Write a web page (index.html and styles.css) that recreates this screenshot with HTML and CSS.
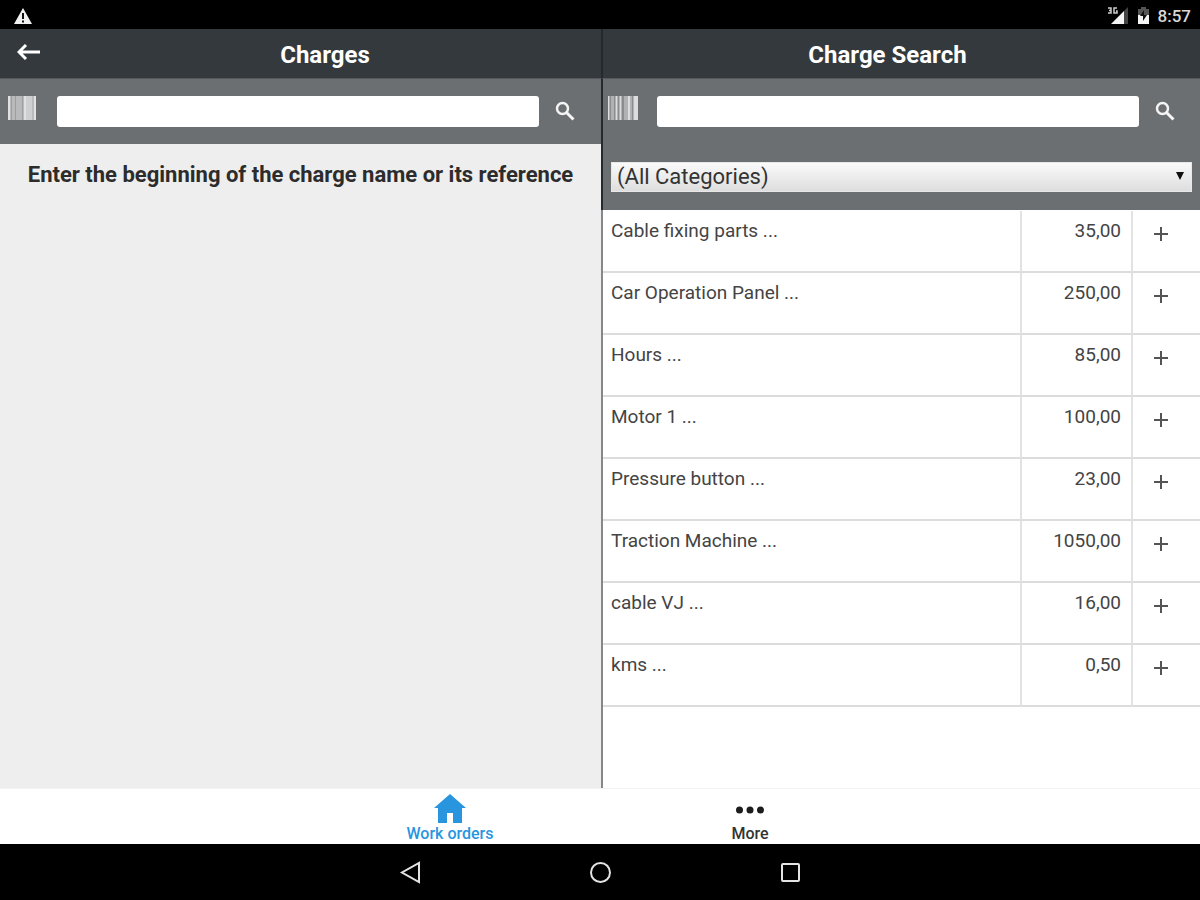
FILE: index.html
```html
<!DOCTYPE html>
<html lang="en">
<head>
<meta charset="utf-8">
<title>Charges</title>
<link rel="stylesheet" href="styles.css">
</head>
<body>
<div class="status">
  <svg width="20" height="18" viewBox="0 0 20 18"><path d="M10 1 19 17H1Z" fill="#f2f2f2"/><path d="M10 6v6M10 13.500v2" stroke="#111" stroke-width="2"/></svg>
  <div class="status-right">
    <svg width="22" height="20" viewBox="0 0 22 20"><path d="M21 1v17h-4V5Z" fill="#444"/><path d="M17 5v13H4Z" fill="#f5f5f5"/><path d="M1 2h3v5H1M2 4.500h2M10 2H7v5h3V5H9" fill="none" stroke="#ccc" stroke-width="1.500"/></svg>
    <svg width="13" height="18" viewBox="0 0 13 18"><path d="M1 2h3V0h5v2h3v7H1Z" fill="#555"/><path d="M1 8h11v9H1Z" fill="#f5f5f5"/><path d="M7 3v5h3l-4 6V9H3Z" fill="#111"/></svg>
    <span class="clock">8:57</span>
  </div>
</div>
<main class="panels">
  <section class="panel panel-left">
    <header class="bar">
      <button class="back" aria-label="Back"><svg width="24" height="16" viewBox="0 0 24 16"><path d="M9 1 2 8l7 7M2 8h21" fill="none" stroke="#fff" stroke-width="3"/></svg></button>
      <h1 class="title">Charges</h1>
    </header>
    <form class="search">
      <button type="button" class="icon-btn" aria-label="Scan barcode"><svg width="30" height="24" viewBox="0 0 30 24"><path fill="#b8babb" d="M1 0h28v24H1Z"/><path fill="#e0e1e2" d="M1 0h2v24H1zM17 0h2v24h-2zM27 0h2v24h-2z"/><path fill="#9c9ea0" d="M4 0h1v24H4zM8 0h1v24H8zM15 0h1v24h-1z"/><path fill="#cdcfd0" d="M19 0h6v24h-6z"/></svg></button>
      <input class="field" type="text" aria-label="Charge name or reference">
      <button type="button" class="icon-btn find" aria-label="Search"><svg width="20" height="20" viewBox="0 0 20 20"><circle cx="7.500" cy="7.500" r="5.500" fill="none" stroke="#f4f4f4" stroke-width="2.500"/><path d="m11.500 11.500 7 7" stroke="#f4f4f4" stroke-width="3"/></svg></button>
    </form>
    <p class="hint">Enter the beginning of the charge name or its reference</p>
  </section>
  <section class="panel panel-right">
    <header class="bar"><h2 class="title">Charge Search</h2></header>
    <form class="search">
      <button type="button" class="icon-btn" aria-label="Scan barcode"><svg width="30" height="24" viewBox="0 0 30 24"><path fill="#b0b2b3" d="M0 0h30v24H0Z"/><path fill="#8a8c8e" d="M2 0h1v24H2zM6 0h1v24H6zM10 0h1v24h-1zM14 0h2v24h-2zM24 0h1v24h-1z"/><path fill="#dcddde" d="M0 0h1v24H0zM8 0h1v24H8zM12 0h1v24h-1zM20 0h2v24h-2zM26 0h4v24h-4z"/></svg></button>
      <input class="field" type="text" aria-label="Search charges">
      <button type="button" class="icon-btn find" aria-label="Search"><svg width="20" height="20" viewBox="0 0 20 20"><circle cx="7.500" cy="7.500" r="5.500" fill="none" stroke="#f4f4f4" stroke-width="2.500"/><path d="m11.500 11.500 7 7" stroke="#f4f4f4" stroke-width="3"/></svg></button>
    </form>
    <div class="filter">
      <select class="category" aria-label="Category"><option>(All Categories)</option></select>
      <svg class="caret" width="8" height="8" viewBox="0 0 8 8"><path d="M0 0h8L4 8Z" fill="#111"/></svg>
    </div>
    <table class="charges">
      <tr><td>Cable fixing parts ...</td><td class="price">35,00</td><td class="add"><button class="plus" aria-label="Add"></button></td></tr>
      <tr><td>Car Operation Panel ...</td><td class="price">250,00</td><td class="add"><button class="plus" aria-label="Add"></button></td></tr>
      <tr><td>Hours ...</td><td class="price">85,00</td><td class="add"><button class="plus" aria-label="Add"></button></td></tr>
      <tr><td>Motor 1 ...</td><td class="price">100,00</td><td class="add"><button class="plus" aria-label="Add"></button></td></tr>
      <tr><td>Pressure button ...</td><td class="price">23,00</td><td class="add"><button class="plus" aria-label="Add"></button></td></tr>
      <tr><td>Traction Machine ...</td><td class="price">1050,00</td><td class="add"><button class="plus" aria-label="Add"></button></td></tr>
      <tr><td>cable VJ ...</td><td class="price">16,00</td><td class="add"><button class="plus" aria-label="Add"></button></td></tr>
      <tr><td>kms ...</td><td class="price">0,50</td><td class="add"><button class="plus" aria-label="Add"></button></td></tr>
    </table>
  </section>
</main>
<nav class="tabs">
  <a class="tab tab-active" href="#orders"><svg width="34" height="30" viewBox="0 0 34 30"><path d="M17 0 33 14h-4v15h-9V19h-6v10H5V14H1Z" fill="#2895de"/></svg>Work orders</a>
  <a class="tab" href="#more"><svg width="34" height="30" viewBox="0 0 34 30"><g fill="#1c1c1c"><circle cx="6.500" cy="16" r="3.500"/><circle cx="17" cy="16" r="3.500"/><circle cx="27.500" cy="16" r="3.500"/></g></svg>More</a>
</nav>
<div class="system">
  <button class="key" aria-label="Back"><svg width="24" height="24" viewBox="0 0 24 24"><path d="M21 3v19L4 12.500Z"/></svg></button>
  <button class="key" aria-label="Home"><svg width="24" height="24" viewBox="0 0 24 24"><circle cx="12.500" cy="12.500" r="9.500"/></svg></button>
  <button class="key" aria-label="Recent apps"><svg width="24" height="24" viewBox="0 0 24 24"><rect x="4" y="4" width="17" height="17" rx="1"/></svg></button>
</div>
</body>
</html>
```
FILE: styles.css
```css
* { box-sizing: border-box; }
body {
  margin: 0;
  min-height: 100vh;
  display: flex;
  flex-direction: column;
  background: #fff;
  color: #333;
  font-family: Roboto, "Liberation Sans", sans-serif;
}
button { border: 0; padding: 0; background: none; }
svg { display: block; }

.status {
  height: 29px;
  padding: 2px 9px 0 13px;
  display: flex;
  align-items: center;
  justify-content: space-between;
  background: #000;
}
.status-right { display: flex; align-items: center; gap: 8px; }
.clock { color: #d8d8d8; font-size: 17px; font-weight: 500; line-height: 20px; }

.panels { flex: 1; display: grid; grid-template-columns: calc(50% + 1px) 1fr; }
.panel-left { background: #eee; }
.panel-right { background: #fff; border-left: 2px solid #858789; }
.bar {
  position: relative;
  height: 49px;
  display: flex;
  align-items: center;
  justify-content: center;
  padding: 2px 0 0 49px;
  background: #33393d;
}
.panel-right .bar { padding: 2px 28px 0 0; }
.panel-right .bar, .panel-right .search, .panel-right .filter { margin-left: -2px; border-left: 2px solid #23292c; }
.title { margin: 0; color: #fff; font-size: 24px; font-weight: 700; line-height: 28px; }
.back { position: absolute; left: 17px; top: 15px; }

.search {
  height: 66px;
  padding: 17px 0;
  display: grid;
  grid-template-columns: 57px 1fr 62px;
  background: #6c6f72;
  border-top: 1px solid #57595c;
}
.panel-right .search { grid-template-columns: 54px 1fr 61px; }
.icon-btn { display: flex; padding-left: 7px; align-items: flex-start; }
.panel-right .icon-btn { padding-left: 5px; }
.search .find, .panel-right .search .find { padding: 5px 0 0 16px; }
.field { width: 100%; height: 31px; border: 0; border-radius: 3px; padding: 0 8px; background: #fff; font: 20px Roboto, sans-serif; }
.hint { margin: 0; padding: 17px 8px; color: #2c2c2c; font-size: 22px; font-weight: 700; line-height: 28px; text-align: center; }

.filter { position: relative; height: 66px; padding: 18px 8px 0; background: #6c6f72; }
.category {
  appearance: none;
  display: block;
  width: 100%;
  height: 30px;
  padding: 0 24px 0 5px;
  border: 1px solid #e8e8e8;
  border-radius: 0;
  background: linear-gradient(#fafafa, #dedede);
  color: #333;
  font: 22px/28px Roboto, sans-serif;
}
.caret { position: absolute; right: 16px; top: 28px; pointer-events: none; }

.charges { width: 100%; margin-top: 1px; border-collapse: separate; border-spacing: 0; table-layout: fixed; }
.charges td {
  height: 62px;
  padding: 8px 10px 0 8px;
  vertical-align: top;
  border-bottom: 2px solid #dcdcdc;
  color: #444;
  font-size: 19px;
  line-height: 24px;
}
.charges .price { width: 111px; text-align: right; border-left: 2px solid #e2e2e2; }
.charges .add { width: 69px; padding: 16px 0 0 21px; border-left: 2px solid #e2e2e2; }
.plus {
  display: block;
  width: 14px;
  height: 14px;
  background: linear-gradient(#555, #555) center / 14px 2px no-repeat, linear-gradient(#555, #555) center / 2px 14px no-repeat;
}

.tabs { height: 56px; display: flex; padding: 0 25%; border-top: 1px solid #f2f2f2; background: #fff; }
.tab {
  flex: 1;
  display: flex;
  flex-direction: column;
  align-items: center;
  padding-top: 5px;
  color: #333;
  font-size: 16px;
  font-weight: 500;
  line-height: 20px;
  text-decoration: none;
}
.tab-active { color: #2895de; }

.system { height: 56px; display: flex; align-items: center; justify-content: center; gap: 166px; background: #000; }
.key svg { fill: none; stroke: #e4e4e4; stroke-width: 2; }
```
